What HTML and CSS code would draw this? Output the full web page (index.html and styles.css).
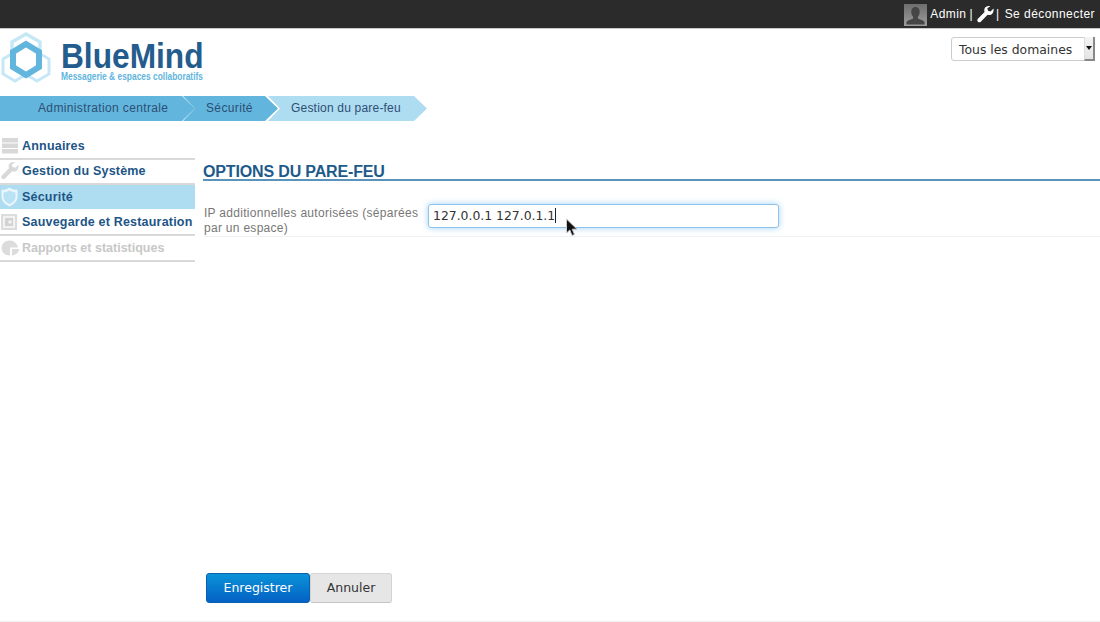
FILE: index.html
```html
<!DOCTYPE html>
<html lang="fr">
<head>
<meta charset="utf-8">
<title>BlueMind</title>
<link rel="stylesheet" href="styles.css">
</head>
<body>
<div class="topbar">
  <svg class="avatar" width="23" height="22" viewBox="0 0 23 22"><defs><linearGradient id="av" x1="0" y1="0" x2="0" y2="1"><stop offset="0" stop-color="#6e6e6e"/><stop offset="1" stop-color="#9c9c9c"/></linearGradient></defs><rect width="23" height="22" fill="url(#av)"/><path d="M11.500 3c3 0 4.400 2.300 4.200 5.200-.1 2-1 3.600-1.800 4.600v1.700c1.700 1 5.500 1.500 6.600 3.500v2.500H2.500V18c1.100-2 4.900-2.500 6.600-3.500v-1.700C8.300 11.800 7.400 10.200 7.300 8.200 7.100 5.300 8.500 3 11.500 3z" fill="#454545"/></svg>
  <span class="top-text">Admin</span>
  <span class="top-sep">|</span>
  <svg class="wrench" width="17" height="17" viewBox="0 0 17 17"><path d="M16.500 2.500l-3 3-2.500-.8-.7-2.400 3-2.100c-2.500-.6-5 .3-5.800 2.500-.4 1.200-.3 2.400.1 3.300L.9 12.800c-.8.800-.8 2 0 2.900.8.800 2.100.8 2.900 0l6.800-6.900c1 .4 2.200.4 3.300 0 2.200-.9 3.100-3.800 2.600-6.300z" fill="#fff"/></svg>
  <span class="top-sep top-sep-last">|</span>
  <span class="top-text">Se déconnecter</span>
</div>
<header class="header">
  <div class="logo">
    <svg class="logo-mark" width="56" height="56" viewBox="0 0 56 56">
      <polygon points="26,4 40,12 40,28 26,36 12,28 12,12" fill="none" stroke="#c6e8f6" stroke-width="3.500"/>
      <polygon points="15,22 27,29 27,44 15,51 3,44 3,29" fill="none" stroke="#c6e8f6" stroke-width="3"/>
      <polygon points="37,22 49,29 49,44 37,51 25,44 25,29" fill="none" stroke="#c6e8f6" stroke-width="3"/>
      <polygon points="26,15 39,23 39,38 26,47 13,38 13,23" fill="#9a9a9a" opacity=".5" transform="translate(0 1)"/>
      <polygon points="26,14 39,22 39,37 26,45 13,37 13,22" fill="#fff" stroke="#62b5dd" stroke-width="6"/>
    </svg>
    <div class="logo-words">
      <div class="logo-name">BlueMind</div>
      <div class="logo-tag">Messagerie &amp; espaces collaboratifs</div>
    </div>
  </div>
  <div class="domain">Tous les domaines<span class="domain-arrow"></span></div>
</header>
<nav class="crumbs">
  <div class="crumb crumb-a">Administration centrale</div>
  <div class="crumb crumb-b">Sécurité</div>
  <div class="crumb crumb-c">Gestion du pare-feu</div>
</nav>
<div class="main">
  <aside class="side">
    <div class="item">
      <svg class="ico" width="20" height="18" viewBox="0 0 20 18"><path d="M2 1h16v4.500H2zM2 6.500h16V11H2zM2 12h16v4.500H2z" fill="#d8d8d8"/></svg>
      <span>Annuaires</span>
    </div>
    <div class="item">
      <svg class="ico" width="20" height="18" viewBox="0 0 17 17"><path d="M16.500 2.500l-3 3-2.500-.8-.7-2.400 3-2.100c-2.500-.6-5 .3-5.800 2.500-.4 1.200-.3 2.400.1 3.300L.9 12.800c-.8.800-.8 2 0 2.900.8.800 2.100.8 2.900 0l6.800-6.900c1 .4 2.200.4 3.300 0 2.200-.9 3.100-3.800 2.600-6.300z" fill="#d8d8d8"/></svg>
      <span>Gestion du Système</span>
    </div>
    <div class="item item-on">
      <svg class="ico" width="20" height="20" viewBox="0 0 20 20"><path d="M9.500 .5c2 1.500 4.500 2.300 8 2.300V10c0 4-3 7-8 9.500C4.500 17 1.500 14 1.500 10V2.800c3.500 0 6-.8 8-2.300z" fill="#e9f6fb"/><path d="M9.500 3.500c1.800 1 3.600 1.700 6 1.900V10c0 3-2 5-6 7.200C5.500 15 3.500 13 3.500 10V5.400c2.400-.2 4.200-.9 6-1.900z" fill="#b9e2f4"/></svg>
      <span>Sécurité</span>
    </div>
    <div class="item">
      <svg class="ico" width="20" height="18" viewBox="0 0 20 18"><path d="M1 1h16v16H1z" fill="#dcdcdc"/><path d="M3 3h12v12H3z" fill="#f2f2f2"/><path d="M5 5h8v8H5z" fill="#d2d2d2"/><circle cx="10" cy="9" r="1.800" fill="#f2f2f2"/></svg>
      <span>Sauvegarde et Restauration</span>
    </div>
    <div class="item item-off">
      <svg class="ico" width="20" height="18" viewBox="0 0 20 18"><path d="M9 1.500a7.500 7.500 0 1 0 0 15c.7 0 1-.3 1-.8V8.500h7.200c.5 0 .7-.4.600-1A8.200 8.200 0 0 0 9 1.500z" fill="#dcdcdc"/><path d="M12 10h7c0 3-2.800 6.200-7 6.500z" fill="#dcdcdc"/></svg>
      <span>Rapports et statistiques</span>
    </div>
  </aside>
  <main class="content">
    <h1 class="title">OPTIONS DU PARE-FEU</h1>
    <div class="row">
      <label class="label">IP additionnelles autorisées (séparées par un espace)</label>
      <div class="field">127.0.0.1 127.0.1.1<span class="caret"></span>
        <svg class="cursor" width="13" height="20" viewBox="0 0 13 20"><path d="M1.500 1v14l3.300-3 2.200 5.500 2.500-1-2.200-5.300H12z" fill="#111" stroke="#ccc" stroke-width="1"/></svg>
      </div>
    </div>
    <div class="actions">
      <div class="btn btn-save">Enregistrer</div>
      <div class="btn btn-cancel">Annuler</div>
    </div>
  </main>
</div>
</body>
</html>
```
FILE: styles.css
```css
html, body { margin: 0; padding: 0; }
body {
  width: 1100px;
  height: 622px;
  overflow: hidden;
  background: #fff;
  font-family: "Liberation Sans", Arial, sans-serif;
  display: flex;
  flex-direction: column;
  box-sizing: border-box;
  border-bottom: 1px solid #eee;
}
.topbar {
  height: 28px;
  flex: none;
  box-sizing: content-box;
  background: #2b2b2b;
  border-bottom: 1px solid #c9c9c9;
  display: flex;
  align-items: center;
  justify-content: flex-end;
  padding-right: 5px;
  color: #fff;
  font-size: 12px;
  letter-spacing: .45px;
}
.avatar { margin-right: 3px; margin-top: 1px; }
.top-sep { margin: 0 4px 0 3px; }
.top-sep-last { margin-right: 5px; margin-left: 2px; }
.header {
  height: 67px;
  flex: none;
  display: flex;
  justify-content: space-between;
  align-items: flex-start;
}
.logo { display: flex; margin: 1px 0 0 0; }
.logo-mark { flex: none; }
.logo-words { margin: 10px 0 0 5px; width: 145px; }
.logo-name {
  font-weight: 700;
  font-size: 35px;
  line-height: 31px;
  color: #235c8d;
  transform: scaleX(.905);
  transform-origin: left center;
  white-space: nowrap;
}
.logo-tag {
  font-weight: 700;
  font-size: 10.500px;
  line-height: 11px;
  color: #62b5dd;
  white-space: nowrap;
  transform: scaleX(.8);
  transform-origin: left center;
}
.domain {
  margin: 8px 5px 0 0;
  width: 144px;
  height: 24px;
  box-sizing: border-box;
  border: 1px solid #ccc;
  border-radius: 3px;
  padding-left: 7px;
  font-family: "DejaVu Sans", sans-serif;
  font-size: 12.400px;
  line-height: 23px;
  color: #333;
  position: relative;
  background: #fff;
}
.domain-arrow {
  position: absolute;
  right: -1px;
  top: -1px;
  width: 11px;
  height: 24px;
  box-sizing: border-box;
  background: linear-gradient(#f4f4f4, #e4e4e4);
  border-right: 2px solid #888;
  border-bottom: 2px solid #888;
  border-left: 1px solid #ddd;
}
.domain-arrow::after {
  content: "";
  position: absolute;
  left: 1px;
  top: 9px;
  border: 3px solid transparent;
  border-top: 4px solid #111;
}
.crumbs {
  display: flex;
  height: 25px;
  flex: none;
  font-size: 12px;
  letter-spacing: .36px;
  color: #2d4f74;
}
.crumb {
  height: 25px;
  line-height: 24px;
  box-sizing: border-box;
  white-space: nowrap;
  flex: none;
  clip-path: polygon(0 0, calc(100% - 13px) 0, 100% 50%, calc(100% - 13px) 100%, 0 100%, 12px 50%);
}
.crumb-a {
  width: 195px;
  padding-left: 38px;
  background: #62b5dd;
  clip-path: polygon(0 0, calc(100% - 13px) 0, 100% 50%, calc(100% - 13px) 100%, 0 100%);
}
.crumb-b { width: 95px; margin-left: -12px; padding-left: 23px; background: #62b5dd; }
.crumb-c { width: 159px; margin-left: -10px; padding-left: 23px; background: #aedcf1; letter-spacing: .2px; }
.main { flex: 1; display: flex; min-height: 0; }
.side { width: 195px; flex: none; padding-top: 13px; }
.item {
  height: 25.500px;
  box-sizing: border-box;
  border-bottom: 2px solid #d9d9d9;
  display: flex;
  align-items: center;
  font-size: 12.500px;
  font-weight: 700;
  letter-spacing: .2px;
  color: #1d5586;
  white-space: nowrap;
}
.ico { flex: none; margin-right: 2px; }
.item-on { background: #aedcf1; border-bottom-color: #fff; }
.item-off { color: #c8c8c8; letter-spacing: 0; }
.content { flex: 1; display: flex; flex-direction: column; padding-left: 8px; min-width: 0; }
.title {
  margin: 41px 0 0;
  font-size: 16px;
  font-weight: 700;
  line-height: 19px;
  letter-spacing: -.15px;
  color: #1d5a8c;
  border-bottom: 2px solid #5b93ba;
  height: 17px;
}
.row {
  display: flex;
  margin: 23px 0 0 1px;
  height: 32px;
  border-bottom: 1px solid #f1f1f1;
}
.label {
  width: 224px;
  flex: none;
  font-size: 12px;
  line-height: 15px;
  letter-spacing: .29px;
  color: #777;
  padding: 2px 8px 0 0;
  box-sizing: border-box;
}
.field {
  width: 351px;
  height: 24px;
  box-sizing: border-box;
  border: 1px solid #8cc4ee;
  border-radius: 3px;
  box-shadow: 0 0 6px rgba(120, 190, 240, .7);
  padding-left: 4px;
  font-family: "DejaVu Sans", sans-serif;
  font-size: 12.400px;
  line-height: 22px;
  color: #333;
  position: relative;
  background: #fff;
}
.caret {
  display: inline-block;
  width: 1px;
  height: 15px;
  background: #222;
  vertical-align: -3px;
}
.cursor { position: absolute; left: 136px; top: 13px; }
.actions { display: flex; margin: 336px 0 0 3px; }
.btn {
  height: 30px;
  box-sizing: border-box;
  border-radius: 3px;
  text-align: center;
  font-family: "DejaVu Sans", sans-serif;
  font-size: 12.500px;
  line-height: 28px;
}
.btn-save {
  width: 104px;
  border: 1px solid #0a5fb0;
  background: linear-gradient(#0a93d8, #0461c4);
  color: #fff;
}
.btn-cancel {
  width: 82px;
  border: 1px solid #d4d4d4;
  border-bottom-color: #c4c4c4;
  background: #e6e6e6;
  color: #333;
}
```
